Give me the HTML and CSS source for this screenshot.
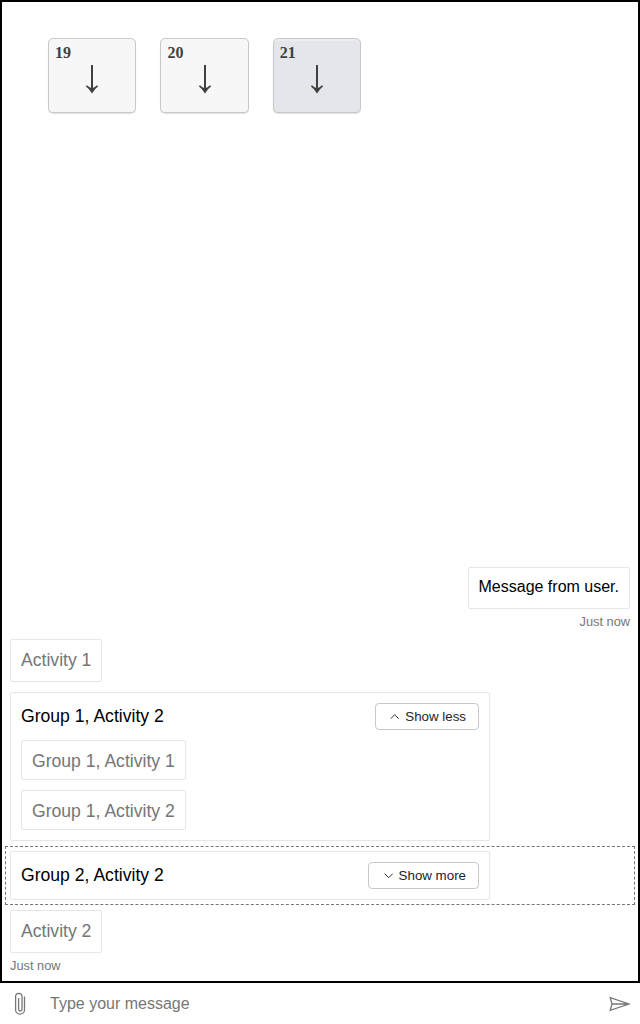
FILE: index.html
```
<!DOCTYPE html>
<html lang="en">
<head>
<meta charset="utf-8">
<title>Web Chat</title>
<link rel="stylesheet" href="styles.css">
</head>
<body>
<div class="chat">
  <main class="transcript">
    <div class="keys">
      <div class="key"><b class="key-index">19</b><svg class="arrow" viewBox="0 0 14 30"><path class="shaft" d="M7 1v27"/><path d="M.8 22.2 2 21.3Q4.600 23.800 7 24.500 9.400 23.800 12 21.300L13.200 22.200Q9.500 25 7 29.500 4.500 25 .8 22.200Z"/></svg></div>
      <div class="key"><b class="key-index">20</b><svg class="arrow" viewBox="0 0 14 30"><path class="shaft" d="M7 1v27"/><path d="M.8 22.2 2 21.3Q4.600 23.800 7 24.500 9.400 23.800 12 21.300L13.200 22.200Q9.500 25 7 29.500 4.500 25 .8 22.200Z"/></svg></div>
      <div class="key key-active"><b class="key-index">21</b><svg class="arrow" viewBox="0 0 14 30"><path class="shaft" d="M7 1v27"/><path d="M.8 22.2 2 21.3Q4.600 23.800 7 24.500 9.400 23.800 12 21.300L13.200 22.200Q9.500 25 7 29.500 4.500 25 .8 22.200Z"/></svg></div>
    </div>
    <div class="activities">
      <div class="from-user">
        <div class="bubble user-bubble">Message from user.</div>
        <div class="status">Just now</div>
      </div>
      <div class="bubble activity">Activity 1</div>
      <section class="bubble group">
        <header class="group-header">
          <span>Group 1, Activity 2</span>
          <button class="toggle"><svg class="chevron" viewBox="0 0 10 10"><path d="M.7 6.7 4.7 2.7l4 4"/></svg>Show less</button>
        </header>
        <div class="bubble nested">Group 1, Activity 1</div>
        <div class="bubble nested">Group 1, Activity 2</div>
      </section>
      <div class="focused">
        <section class="bubble group">
          <header class="group-header">
            <span>Group 2, Activity 2</span>
            <button class="toggle"><svg class="chevron" viewBox="0 0 10 10"><path d="M.7 2.7l4 4 4-4"/></svg>Show more</button>
          </header>
        </section>
      </div>
      <div class="bubble activity">Activity 2</div>
      <div class="status">Just now</div>
    </div>
  </main>
  <footer class="send-box">
    <svg class="clip" viewBox="0 0 12 24"><path d="M10.5 4.6v13.1a4.4 4.4 0 0 1-8.9 0V4.5a3.2 3.2 0 0 1 6.4 0v12.8a1.7 1.7 0 0 1-3.4 0V6"/></svg>
    <input class="message-input" type="text" placeholder="Type your message">
    <svg class="send" viewBox="0 0 22 16"><path d="M1.2 1.7 20 8 1.2 14.3 3 8ZM3 8h17"/></svg>
  </footer>
</div>
</body>
</html>
```
FILE: styles.css
```
* {
  box-sizing: border-box;
}

body {
  margin: 0;
  background: #fff;
  font-family: "Liberation Sans", Arial, sans-serif;
  font-size: 16px;
  color: #000;
}

.chat {
  display: flex;
  flex-direction: column;
  height: 1024px;
}

.transcript {
  display: flex;
  flex-direction: column;
  justify-content: space-between;
  height: 983px;
  padding: 36px 8px 8px;
  border: 2px solid #000;
}

.keys {
  display: flex;
  gap: 24px;
  padding-left: 38px;
  font-family: "Liberation Serif", serif;
  color: #404040;
}

.key {
  display: grid;
  width: 88.4px;
  height: 75px;
  border: 1px solid #c8c8c8;
  border-radius: 5px;
  background: #f7f7f7;
  box-shadow: 0 1px 1px rgba(0, 0, 0, .12);
}

.key-active {
  background: #e3e6ea;
  box-shadow: 0 1px 1px rgba(0, 0, 0, .12), inset 0 2px 1px rgba(255, 255, 255, .3);
}

.key-index,
.arrow {
  grid-area: 1 / 1;
}

.key-index {
  padding: 5px 6px;
  line-height: 18px;
}

.arrow {
  width: 14px;
  height: 30px;
  margin-top: 25px;
  justify-self: center;
  fill: #404040;
}

.shaft {
  stroke: #404040;
  stroke-width: 2;
}

.activities {
  display: flex;
  flex-direction: column;
  align-items: flex-start;
}

.bubble {
  border: 1px solid #e6e6e6;
  border-radius: 2px;
  background: #fff;
}

.from-user {
  display: flex;
  flex-direction: column;
  align-items: flex-end;
  align-self: stretch;
  margin-bottom: 10px;
}

.user-bubble {
  height: 42px;
  padding: 0 10px;
  line-height: 38px;
}

.status {
  padding-top: 5px;
  font-size: 12.8px;
  line-height: 15px;
  color: #767676;
}

.activity,
.nested {
  padding: 0 10px;
  font-size: 17.6px;
  color: #767676;
}

.activity {
  height: 43px;
  line-height: 41px;
}

.group {
  display: flex;
  flex-direction: column;
  align-items: flex-start;
  gap: 10px;
  width: 480px;
  margin-top: 10px;
  padding: 10px;
  font-size: 17.6px;
}

.group-header {
  display: flex;
  align-items: center;
  justify-content: space-between;
  align-self: stretch;
  height: 27px;
}

.nested {
  height: 40px;
  line-height: 40px;
}

.toggle {
  display: flex;
  align-items: center;
  height: 27px;
  padding: 0 12px 0 14.3px;
  border: 1px solid #c8c8c8;
  border-radius: 4px;
  background: #fff;
  color: #242424;
  font: 13.33px "Liberation Sans", Arial, sans-serif;
}

.chevron {
  width: 10px;
  height: 10px;
  margin-right: 5px;
  fill: none;
  stroke: #333;
}

.focused {
  align-self: stretch;
  height: 59px;
  margin: 5px -5px;
  padding: 4px;
  border: 1px dashed #767676;
}

.focused .group {
  height: 49px;
  margin-top: 0;
}

.send-box {
  display: flex;
  align-items: center;
  height: 41px;
  padding: 0 9px 0 14px;
}

.clip {
  width: 12px;
  height: 24px;
}

.send {
  width: 22px;
  height: 16px;
}

.clip,
.send {
  fill: none;
  stroke: #767676;
  stroke-width: 1.3;
}

.message-input {
  flex: 1;
  margin-left: 24px;
  padding: 0;
  border: 0;
  outline: 0;
  background: transparent;
  font: inherit;
}

.message-input::placeholder {
  color: #767676;
}
```
